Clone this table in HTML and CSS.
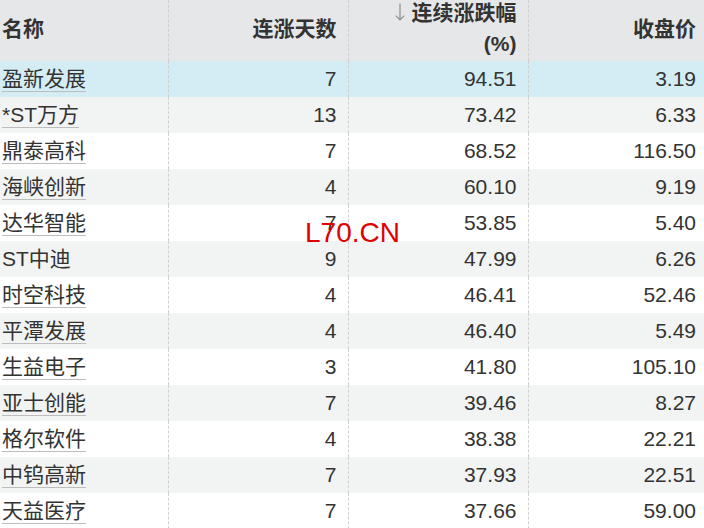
FILE: index.html
```html
<!DOCTYPE html>
<html lang="zh">
<head>
<meta charset="utf-8">
<link rel="stylesheet" href="styles.css">
</head>
<body>
<div class="wrap">
<table class="grid">
<colgroup><col class="c1"><col class="c2"><col class="c3"><col class="c4"></colgroup>
<thead>
<tr>
<th class="name">名称</th>
<th>连涨天数</th>
<th><div class="two"><svg class="arrow" width="10" height="18" viewBox="0 0 10 18"><path d="M5 0.5V17M0.8 12.6L5 17L9.2 12.6" fill="none" stroke="#8e8e8e" stroke-width="1.2"/></svg> 连续涨跌幅<br>(%)</div></th>
<th class="last">收盘价</th>
</tr>
</thead>
<tbody>
<tr class="hl"><td class="name"><a>盈新发展</a></td><td>7</td><td>94.51</td><td class="last">3.19</td></tr>
<tr><td class="name"><a>*ST万方</a></td><td>13</td><td>73.42</td><td class="last">6.33</td></tr>
<tr><td class="name"><a>鼎泰高科</a></td><td>7</td><td>68.52</td><td class="last">116.50</td></tr>
<tr><td class="name"><a>海峡创新</a></td><td>4</td><td>60.10</td><td class="last">9.19</td></tr>
<tr><td class="name"><a>达华智能</a></td><td>7</td><td>53.85</td><td class="last">5.40</td></tr>
<tr><td class="name"><a class="plain">ST中迪</a></td><td>9</td><td>47.99</td><td class="last">6.26</td></tr>
<tr><td class="name"><a>时空科技</a></td><td>4</td><td>46.41</td><td class="last">52.46</td></tr>
<tr><td class="name"><a>平潭发展</a></td><td>4</td><td>46.40</td><td class="last">5.49</td></tr>
<tr><td class="name"><a>生益电子</a></td><td>3</td><td>41.80</td><td class="last">105.10</td></tr>
<tr><td class="name"><a>亚士创能</a></td><td>7</td><td>39.46</td><td class="last">8.27</td></tr>
<tr><td class="name"><a>格尔软件</a></td><td>4</td><td>38.38</td><td class="last">22.21</td></tr>
<tr><td class="name"><a>中钨高新</a></td><td>7</td><td>37.93</td><td class="last">22.51</td></tr>
<tr><td class="name"><a>天益医疗</a></td><td>7</td><td>37.66</td><td class="last">59.00</td></tr>
</tbody>
</table>
<div class="watermark">L70.CN</div>
</div>
</body>
</html>
```
FILE: styles.css
```css
html, body {
  margin: 0;
  padding: 0;
  background: #fff;
  overflow: hidden;
}
.wrap {
  position: relative;
  width: 704px;
  height: 528px;
  overflow: hidden;
}
.grid {
  width: 704px;
  table-layout: fixed;
  border-collapse: collapse;
  font-family: "Liberation Sans", "Noto Sans CJK SC", sans-serif;
  font-size: 21px;
  color: #333;
}
.c1 { width: 168px; }
.c2 { width: 180px; }
.c3 { width: 180px; }
.c4 { width: 176px; }
th, td {
  padding: 0 11px 0 0;
  text-align: right;
  border-right: 1px dashed #d0d0d0;
  white-space: nowrap;
}
th {
  height: 56px;
  padding-bottom: 5px;
  line-height: 31px;
  background: #e6e7e9;
  font-weight: bold;
  vertical-align: middle;
}
th .two {
  margin: -3px 0 -3px;
}
td {
  height: 36px;
  line-height: 24px;
  vertical-align: middle;
}
th.name, td.name {
  text-align: left;
  padding-left: 2px;
}
th.last, td.last {
  padding-right: 8px;
  border-right: none;
}
.arrow {
  display: inline-block;
  vertical-align: -1px;
  margin-right: 1px;
}
tbody tr:nth-child(even) td {
  background: #f2f3f3;
}
tbody tr.hl td {
  background: #d4edf4;
}
td.name a {
  display: inline-block;
  line-height: 24px;
  border-bottom: 1px solid #bdbdbd;
  color: #333;
}
td.name a.plain {
  border-bottom-color: transparent;
}
.watermark {
  position: absolute;
  left: 305px;
  top: 219px;
  font-family: "Liberation Sans", sans-serif;
  font-size: 28px;
  line-height: 28px;
  color: #e00000;
}
```
